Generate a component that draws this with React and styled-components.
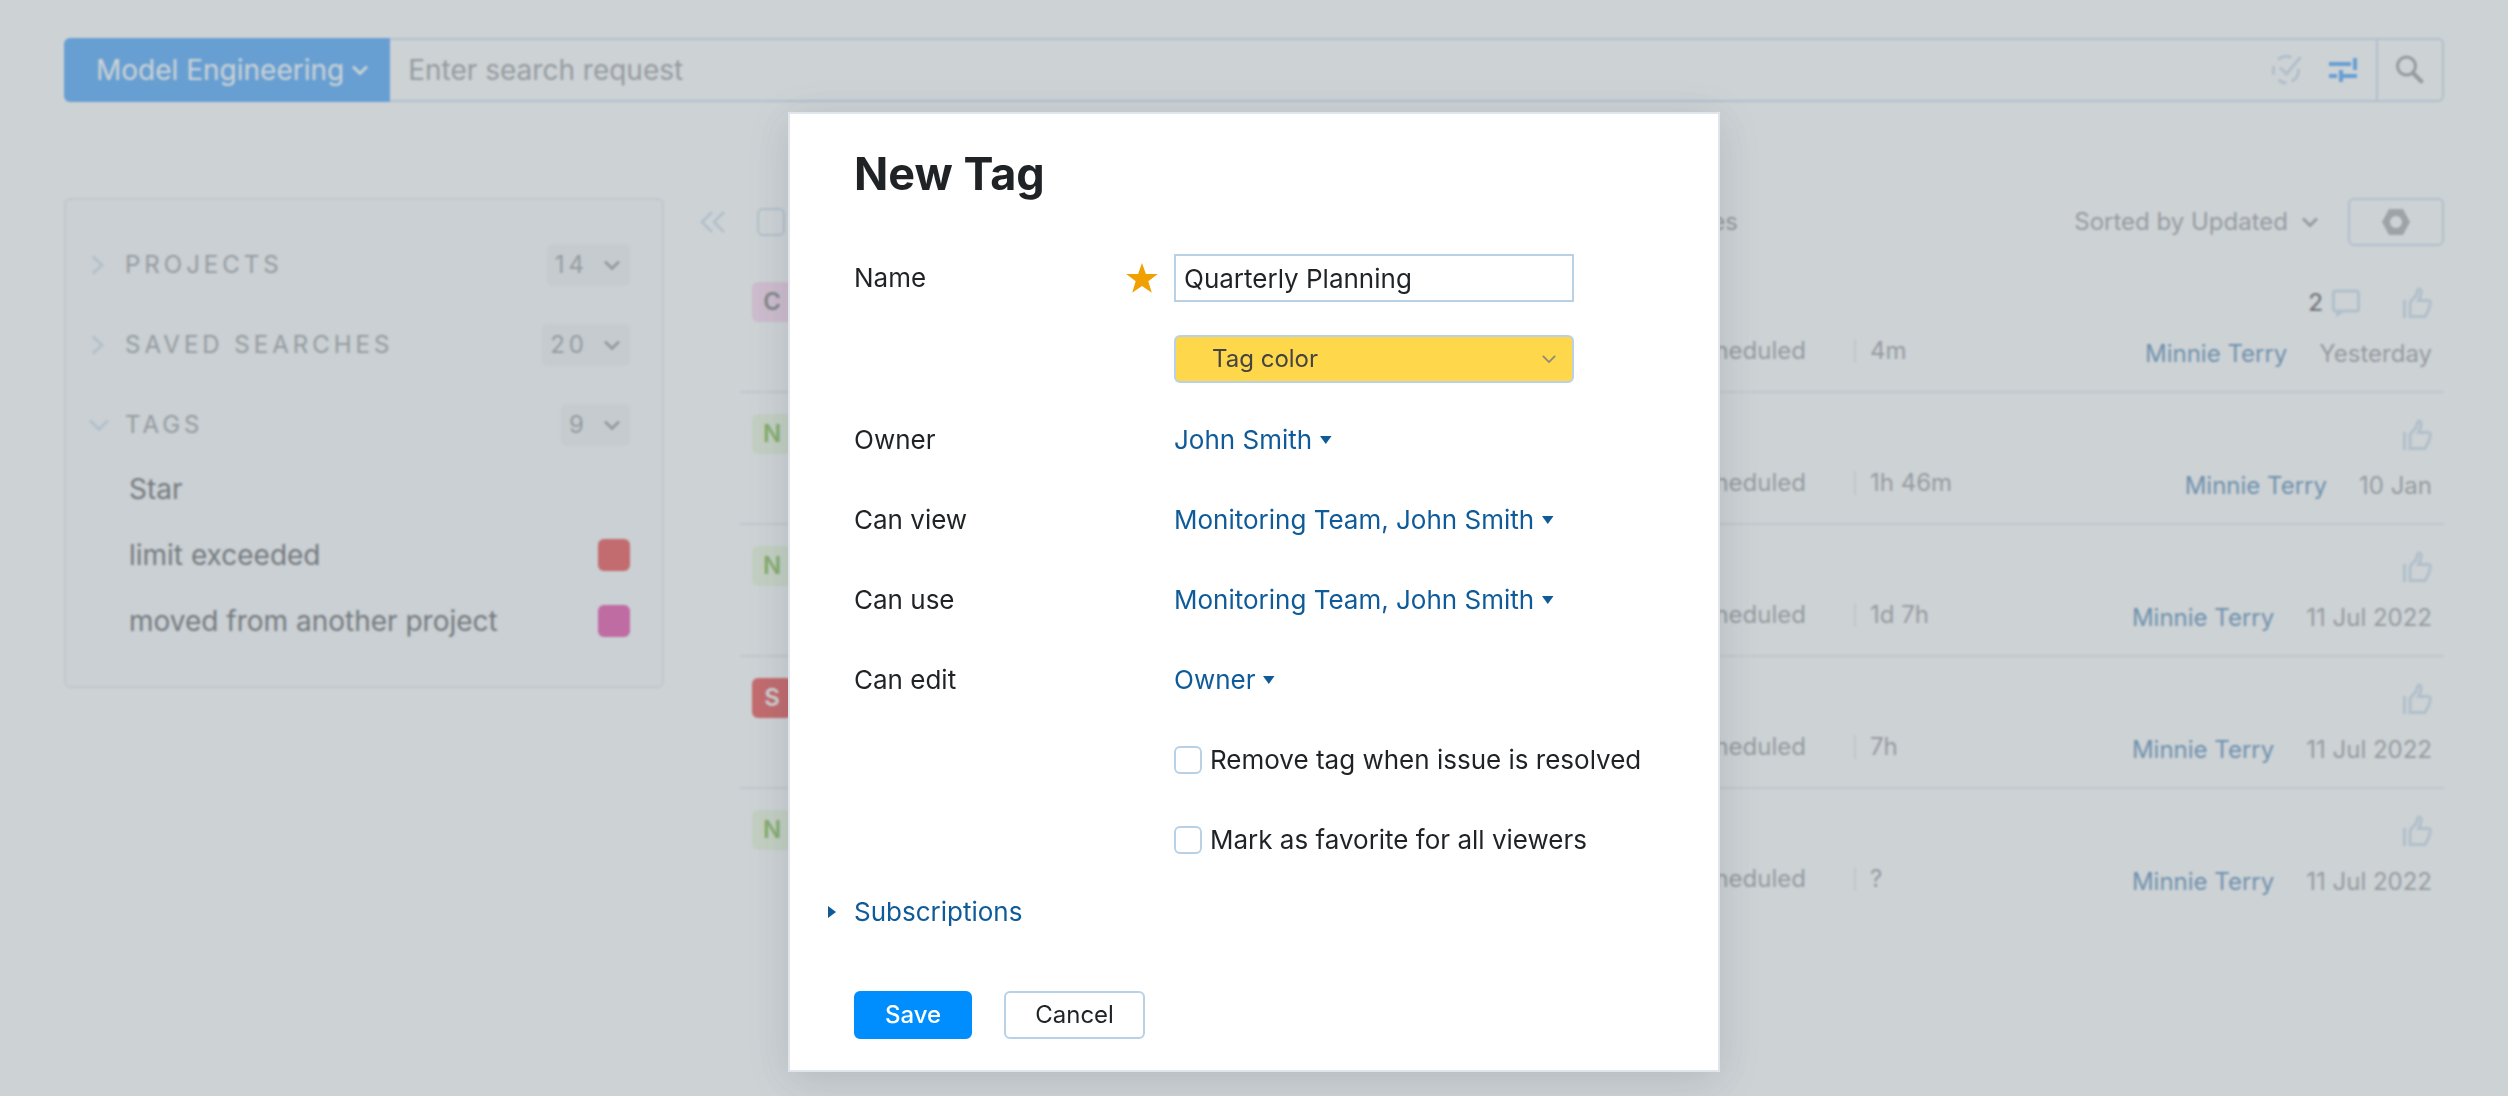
import React, { useState } from "react";

import styled, { createGlobalStyle } from "styled-components";

const GlobalStyle = createGlobalStyle`
  * {
    box-sizing: border-box;
  }

  body {
    margin: 0;
    background: #fff;
    color: #1f2326;
    font-family: Inter, "Liberation Sans", sans-serif;
    font-size: 26px;
    line-height: 32px;
  }

  button, input, select {
    margin: 0;
    font: inherit;
    color: inherit;
  }

  button {
    padding: 0;
    border: 0;
    background: none;
    cursor: pointer;
  }

  svg {
    display: block;
    flex-shrink: 0;
  }
`;

const Page = styled.div`
  min-height: 100vh;
  padding: 38px 64px 0;
`;

const SearchBar = styled.form`
  display: flex;
  height: 64px;
  font-size: 28px;
`;

const ContextButton = styled.button`
  display: flex;
  align-items: center;
  gap: 8px;
  padding: 0 22px 0 32px;
  border-radius: 6px 0 0 6px;
  background: #0080fa;
  color: #fff;
`;

const SearchBox = styled.div`
  flex: 1;
  display: flex;
  align-items: center;
  gap: 26px;
  padding: 0 18px;
  border: 2px solid #b8d1e5;
  border-left: 0;
`;

const SearchInput = styled.input`
  flex: 1;
  min-width: 0;
  padding: 0;
  border: 0;
  outline: 0;
  background: none;

  &::placeholder {
    color: #737577;
    opacity: 1;
  }
`;

const SearchButton = styled.button`
  display: flex;
  align-items: center;
  justify-content: center;
  width: 66px;
  border: 2px solid #b8d1e5;
  border-left: 0;
  border-radius: 0 6px 6px 0;
  color: #737577;
`;

const Content = styled.div`
  display: flex;
  align-items: flex-start;
  margin-top: 96px;
`;

const Sidebar = styled.aside`
  width: 600px;
  padding: 34px 32px 32px 23px;
  border: 2px solid #dfe5eb;
  border-radius: 6px;
  background: #f7f9fa;
`;

const SectionHeader = styled.div`
  display: flex;
  align-items: center;
  height: 62px;
  color: #737577;
  font-size: 24px;
  letter-spacing: 4px;

  & + & {
    margin-top: 18px;
  }
`;

const SectionToggle = styled.button`
  display: flex;
  align-items: center;
  margin-right: auto;
  text-transform: uppercase;
  letter-spacing: inherit;

  svg {
    width: 20px;
    margin-right: 16px;
    color: #b8d1e5;
  }
`;

const SectionCounter = styled.button`
  display: flex;
  align-items: center;
  gap: 16px;
  height: 42px;
  padding: 0 10px 0 8px;
  border-radius: 6px;
  background: #ebeef0;
  letter-spacing: inherit;
`;

const TagList = styled.ul`
  margin: 0;
  padding: 0 0 0 40px;
  list-style: none;
`;

const TagItem = styled.li`
  display: flex;
  align-items: center;
  justify-content: space-between;
  height: 66px;
  font-size: 28px;
`;

const Swatch = styled.span`
  width: 32px;
  height: 32px;
  border-radius: 6px;
  background: ${({ $color }) => $color};
`;

const CollapseButton = styled.button`
  margin: 13px 14px 0 36px;
  color: #b8d1e5;
`;

const IssuePane = styled.main`
  flex: 1;
  min-width: 0;
  color: #737577;
  font-size: 24px;
`;

const IssueToolbar = styled.div`
  display: grid;
  grid-template-columns: minmax(0, 1fr) 706px;
  align-items: center;
  height: 48px;
  margin-bottom: 15px;
  padding-left: 17px;
`;

const ToolbarStart = styled.div`
  display: flex;
  align-items: center;
  justify-content: space-between;
`;

const ToolbarEnd = styled.div`
  display: flex;
  align-items: center;
  justify-content: flex-end;
  gap: 30px;
`;

const SortButton = styled.button`
  display: flex;
  align-items: center;
  gap: 14px;
`;

const SettingsButton = styled.button`
  display: flex;
  align-items: center;
  justify-content: center;
  width: 96px;
  height: 48px;
  border: 2px solid #b8d1e5;
  border-radius: 6px;
`;

const IssueList = styled.ul`
  margin: 0;
  padding: 0;
  list-style: none;
`;

const IssueRow = styled.li`
  display: grid;
  grid-template-columns: 40px minmax(0, 1fr) 590px;
  height: 132px;
  padding: 21px 0 0 12px;
  border-bottom: 2px solid #dfe5eb;

  &:last-child {
    border-bottom: 0;
  }
`;

const priorities = {
  C: { background: "#ffc8ea", color: "#444" },
  N: { background: "#e6f6cf", color: "#4da400" },
  S: { background: "#e30000", color: "#fff" },
};

const Priority = styled.span`
  display: flex;
  align-items: center;
  justify-content: center;
  height: 40px;
  border-radius: 6px;
  background: ${({ $level }) => priorities[$level].background};
  color: ${({ $level }) => priorities[$level].color};
  font-weight: 600;
`;

const Field = styled.span`
  justify-self: end;
  margin-top: 53px;
  padding-right: 48px;
`;

const IssueSide = styled.div`
  display: grid;
  grid-template-columns: auto 1fr;
`;

const Estimation = styled.span`
  align-self: start;
  margin-top: 57px;
  padding-left: 14px;
  border-left: 2px solid #dfe5eb;
  line-height: 24px;
`;

const IssueInfo = styled.div`
  display: flex;
  flex-direction: column;
  align-items: flex-end;
  gap: 18px;
  padding: 4px 12px 0 0;
`;

const IssueActions = styled.div`
  display: flex;
  align-items: center;
  gap: 42px;
  height: 34px;
`;

const CommentsButton = styled.button`
  display: flex;
  align-items: center;
  gap: 9px;
  color: #1f2326;
  font-weight: 500;
`;

const IssueMeta = styled.div`
  display: flex;
  gap: 32px;
`;

const UserLink = styled.a`
  color: #0f5b99;
  text-decoration: none;
`;

const Overlay = styled.div`
  position: fixed;
  inset: 0;
  display: flex;
  align-items: flex-start;
  justify-content: center;
  padding-top: 112px;
  background: rgba(172, 180, 185, 0.6);
  backdrop-filter: blur(1px);
`;

const Dialog = styled.section`
  width: 932px;
  padding: 32px 64px 31px;
  border: 2px solid #dfe5eb;
  background: #fff;
  box-shadow: 0 8px 40px rgba(20, 40, 55, 0.14);
`;

const DialogTitle = styled.h1`
  margin: 0 0 36px;
  font-size: 45px;
  line-height: 56px;
  font-weight: 700;
`;

const FormRow = styled.div`
  display: grid;
  grid-template-columns: 320px 1fr;
  align-items: center;
  height: 80px;
`;

const ColorRow = styled(FormRow)`
  height: 82px;
`;

const LabelCell = styled.div`
  grid-column: 1;
  display: flex;
  align-items: center;
  justify-content: space-between;
  padding-right: 16px;
`;

const ValueCell = styled.div`
  grid-column: 2;
  display: flex;
  align-items: center;
`;

const NameInput = styled.input`
  width: 400px;
  height: 48px;
  padding: 0 8px;
  border: 2px solid #b8d1e5;
  border-radius: 0;
  outline: 0;
`;

const ColorSelectWrapper = styled.div`
  display: grid;
  grid-template-columns: 1fr 30px;
  align-items: center;
  width: 400px;
  height: 48px;
  border: 2px solid #b8d1e5;
  border-radius: 6px;
  background: #ffd74b;
  color: #8a8a7a;
`;

const ColorSelect = styled.select`
  grid-area: 1 / 1 / 2 / 3;
  height: 44px;
  padding: 0 36px;
  border: 0;
  outline: 0;
  background: none;
  color: #444;
  font-size: 24px;
  appearance: none;
`;

const SelectIcon = styled.span`
  grid-area: 1 / 2;
  pointer-events: none;
`;

const LinkButton = styled.button`
  display: flex;
  align-items: center;
  gap: 8px;
  color: #0f5b99;
`;

const CheckboxLabel = styled.label`
  display: flex;
  align-items: center;
  gap: 8px;
`;

const Checkbox = styled.input`
  width: 28px;
  height: 28px;
  border: 2px solid #b8d1e5;
  border-radius: 6px;
  background: none;
  appearance: none;

  &:checked {
    background: #008eff;
  }
`;

const SubscriptionsButton = styled(LinkButton)`
  gap: 18px;
  margin: 16px 0 63px -26px;
`;

const DialogActions = styled.div`
  display: flex;
  gap: 32px;
`;

const ActionButton = styled.button`
  height: 48px;
  padding: 0 29px;
  border: 2px solid ${({ $primary }) => ($primary ? "#008eff" : "#b8d1e5")};
  border-radius: 6px;
  background: ${({ $primary }) => ($primary ? "#008eff" : "#fff")};
  color: ${({ $primary }) => ($primary ? "#fff" : "#1f2326")};
  font-size: 24px;
  font-weight: ${({ $primary }) => ($primary ? 500 : 400)};
`;

const ChevronDown = ({ size = 16, stroke = 3 }) => (
  <svg width={size} height={size} viewBox="0 0 16 16" fill="none" stroke="currentColor" strokeWidth={stroke}>
    <path d="M1 4.5l7 7 7-7" />
  </svg>
);

const ChevronRight = () => (
  <svg width="20" height="20" viewBox="0 0 20 20" fill="none" stroke="currentColor" strokeWidth="2.5">
    <path d="M4 1.500l9 8.500-9 8.500" />
  </svg>
);

const CollapseIcon = () => (
  <svg width="26" height="22" viewBox="0 0 26 22" fill="none" stroke="currentColor" strokeWidth="2.5">
    <path d="M12 1L2 11l10 10M24 1L14 11l10 10" />
  </svg>
);

const DraftCheckIcon = () => (
  <svg width="30" height="30" viewBox="0 0 30 30" fill="none" stroke="#b8d1e5" strokeWidth="3">
    <path d="M6 4.500A13 13 0 0 1 19.500 2.500M2 11a13 13 0 0 0 0 8.500M6.500 25a13 13 0 0 0 8 3M19.500 26.500A13 13 0 0 0 26.500 14M8 12.500l6.500 6.500L28.500 2" />
  </svg>
);

const SlidersIcon = () => (
  <svg width="30" height="26" viewBox="0 0 30 26" fill="none" stroke="#0080fa" strokeWidth="4">
    <path d="M1 7h22M1 19h8M13 19h16M27 1v12M13 13v12" />
  </svg>
);

const SearchIcon = () => (
  <svg width="30" height="30" viewBox="0 0 30 30" fill="none" stroke="currentColor">
    <circle cx="11.500" cy="11" r="9" strokeWidth="3" />
    <path d="M17.500 17.500l10 10" strokeWidth="4" />
  </svg>
);

const NutIcon = () => (
  <svg width="28" height="26" viewBox="0 0 28 26">
    <path
      d="M7 0h14l7 13-7 13H7L0 13zM14 7a6 6 0 1 0 0 12 6 6 0 0 0 0-12z"
      fill="#888a8c"
      fillRule="evenodd"
    />
  </svg>
);

const CommentIcon = () => (
  <svg width="28" height="28" viewBox="0 0 28 28">
    <rect x="1.500" y="2" width="25" height="20" rx="2" fill="none" stroke="#b8d1e5" strokeWidth="3" />
    <path d="M4 22h9l-9 6.500z" fill="#b8d1e5" />
  </svg>
);

const ThumbIcon = () => (
  <svg width="30" height="32" viewBox="0 0 30 32" fill="none" stroke="#b8d1e5" strokeWidth="3">
    <path d="M2.500 13v18" />
    <path d="M8 29.500V15.500l6-7 1.500-5c.5-2 3-2 3.500 0 .8 3-.5 6-2.500 10h9.500c2 0 2.700 1.500 2.300 3.500-.8 4-2.300 8-5.300 12.500z" />
  </svg>
);

const StarIcon = () => (
  <svg width="32" height="30" viewBox="0 0 32 30">
    <path d="M16 0l3.900 11.100H31.800L22.300 18.300l3.500 11.500L16 22.900 6.200 29.800l3.500-11.500L.2 11.100h11.900z" fill="#f0a000" />
  </svg>
);

const CaretDown = () => (
  <svg width="12" height="8" viewBox="0 0 12 8">
    <path d="M0 0h11.500L5.750 8z" fill="currentColor" />
  </svg>
);

const CaretRight = () => (
  <svg width="8" height="12" viewBox="0 0 8 12">
    <path d="M0 0v12l8-6z" fill="currentColor" />
  </svg>
);

const sections = [
  { title: "Projects", count: 14 },
  { title: "Saved searches", count: 20 },
  { title: "Tags", count: 9, open: true },
];

const tags = [
  { name: "Star" },
  { name: "limit exceeded", color: "#e30000" },
  { name: "moved from another project", color: "#dc0083" },
];

const issues = [
  { priority: "C", estimation: "4m", updated: "Yesterday", comments: 2 },
  { priority: "N", estimation: "1h 46m", updated: "10 Jan" },
  { priority: "N", estimation: "1d 7h", updated: "11 Jul 2022" },
  { priority: "S", estimation: "7h", updated: "11 Jul 2022" },
  { priority: "N", estimation: "?", updated: "11 Jul 2022" },
];

const permissions = [
  { label: "Owner", value: "John Smith" },
  { label: "Can view", value: "Monitoring Team, John Smith" },
  { label: "Can use", value: "Monitoring Team, John Smith" },
  { label: "Can edit", value: "Owner" },
];

const Issue = ({ priority, estimation, updated, comments }) => (
  <IssueRow>
    <Priority $level={priority}>{priority}</Priority>
    <Field>Unscheduled</Field>
    <IssueSide>
      <Estimation>{estimation}</Estimation>
      <IssueInfo>
        <IssueActions>
          {comments && (
            <CommentsButton type="button">
              {comments}
              <CommentIcon />
            </CommentsButton>
          )}
          <button type="button" aria-label="Vote">
            <ThumbIcon />
          </button>
        </IssueActions>
        <IssueMeta>
          <UserLink href="#user">Minnie Terry</UserLink>
          <span>{updated}</span>
        </IssueMeta>
      </IssueInfo>
    </IssueSide>
  </IssueRow>
);

const TagDialog = () => {
  const [name, setName] = useState("Quarterly Planning");

  return (
    <Dialog role="dialog" aria-labelledby="dialog-title">
      <DialogTitle id="dialog-title">New Tag</DialogTitle>
      <FormRow>
        <LabelCell>
          <label htmlFor="tag-name">Name</label>
          <StarIcon />
        </LabelCell>
        <ValueCell>
          <NameInput id="tag-name" value={name} onChange={(e) => setName(e.target.value)} />
        </ValueCell>
      </FormRow>
      <ColorRow>
        <ValueCell>
          <ColorSelectWrapper>
            <ColorSelect aria-label="Tag color">
              <option>Tag color</option>
            </ColorSelect>
            <SelectIcon>
              <ChevronDown size={14} stroke={2} />
            </SelectIcon>
          </ColorSelectWrapper>
        </ValueCell>
      </ColorRow>
      {permissions.map(({ label, value }) => (
        <FormRow key={label}>
          <LabelCell>{label}</LabelCell>
          <ValueCell>
            <LinkButton type="button" aria-label={`${label}: ${value}`}>
              {value}
              <CaretDown />
            </LinkButton>
          </ValueCell>
        </FormRow>
      ))}
      <FormRow>
        <ValueCell>
          <CheckboxLabel>
            <Checkbox type="checkbox" />
            Remove tag when issue is resolved
          </CheckboxLabel>
        </ValueCell>
      </FormRow>
      <FormRow>
        <ValueCell>
          <CheckboxLabel>
            <Checkbox type="checkbox" />
            Mark as favorite for all viewers
          </CheckboxLabel>
        </ValueCell>
      </FormRow>
      <SubscriptionsButton type="button">
        <CaretRight />
        Subscriptions
      </SubscriptionsButton>
      <DialogActions>
        <ActionButton type="button" $primary>
          Save
        </ActionButton>
        <ActionButton type="button">Cancel</ActionButton>
      </DialogActions>
    </Dialog>
  );
};

const App = () => (
  <>
    <GlobalStyle />
    <Page>
      <SearchBar>
        <ContextButton type="button">
          Model Engineering
          <ChevronDown />
        </ContextButton>
        <SearchBox>
          <SearchInput aria-label="Search" placeholder="Enter search request" />
          <DraftCheckIcon />
          <SlidersIcon />
        </SearchBox>
        <SearchButton type="button" aria-label="Run search">
          <SearchIcon />
        </SearchButton>
      </SearchBar>
      <Content>
        <Sidebar>
          {sections.map(({ title, count, open }) => (
            <SectionHeader key={title}>
              <SectionToggle type="button">
                {open ? <ChevronDown size={20} stroke={2} /> : <ChevronRight />}
                {title}
              </SectionToggle>
              <SectionCounter type="button">
                {count}
                <ChevronDown />
              </SectionCounter>
            </SectionHeader>
          ))}
          <TagList>
            {tags.map(({ name, color }) => (
              <TagItem key={name}>
                {name}
                {color && <Swatch $color={color} />}
              </TagItem>
            ))}
          </TagList>
        </Sidebar>
        <CollapseButton type="button" aria-label="Collapse sidebar">
          <CollapseIcon />
        </CollapseButton>
        <IssuePane>
          <IssueToolbar>
            <ToolbarStart>
              <Checkbox type="checkbox" aria-label="Select all" />
              <span>issues</span>
            </ToolbarStart>
            <ToolbarEnd>
              <SortButton type="button">
                Sorted by Updated
                <ChevronDown />
              </SortButton>
              <SettingsButton type="button" aria-label="Settings">
                <NutIcon />
              </SettingsButton>
            </ToolbarEnd>
          </IssueToolbar>
          <IssueList>
            {issues.map((issue, index) => (
              <Issue key={index} {...issue} />
            ))}
          </IssueList>
        </IssuePane>
      </Content>
    </Page>
    <Overlay>
      <TagDialog />
    </Overlay>
  </>
);

export default App;
